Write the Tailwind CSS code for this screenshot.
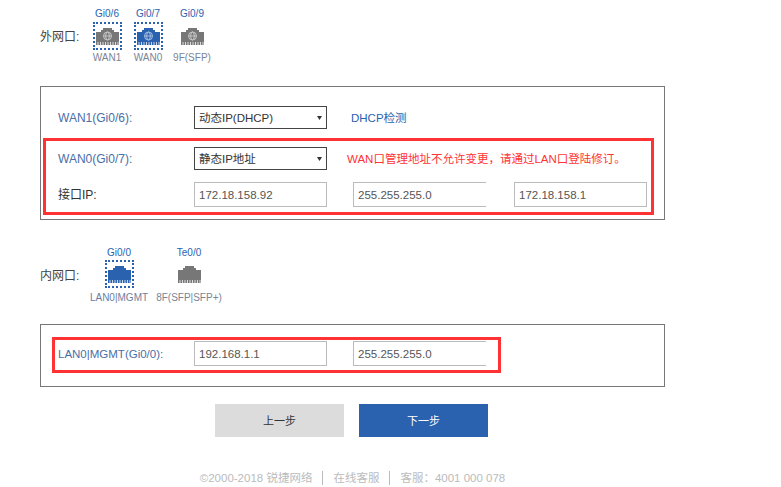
<!DOCTYPE html>
<html lang="zh-CN">
<head>
    <meta charset="UTF-8">
    <meta name="viewport" content="width=device-width, initial-scale=1.0">
    <title>接口配置</title>
    <script src="https://cdn.jsdelivr.net/npm/@tailwindcss/browser@4"></script>
</head>
<body class="bg-white">
<div class="relative w-[781px] h-[487px] overflow-hidden bg-white pl-10 pt-[6px] font-['Liberation_Sans','Noto_Sans_CJK_SC',sans-serif] text-[11.5px] leading-[14px] text-[#555]">

    <svg class="hidden">
        <symbol id="port" viewBox="0 0 23 17">
            <path d="M0 4h5V2h2V0h9v2h2v2h5v13H0z" fill="currentColor"/>
            <path d="M2 14v3M4.500 14v3M7 14v3M9.500 14v3M12 14v3M14.500 14v3M17 14v3M19.500 14v3M22 14v3" stroke="#fff" stroke-width="1" opacity=".75"/>
        </symbol>
        <symbol id="globe" viewBox="0 0 23 17">
            <g fill="none" stroke="#fff" stroke-width=".8" opacity=".7">
                <circle cx="11.500" cy="8" r="4"/>
                <ellipse cx="11.500" cy="8" rx="1.800" ry="4"/>
                <path d="M7.500 8h8"/>
            </g>
        </symbol>
    </svg>

    <!-- 外网口 -->
    <div class="flex">
        <div class="w-[47px] h-[59px] flex items-center text-xs text-[#444] pt-[2px]">外网口:</div>
        <div class="w-[40px] flex flex-col items-center text-[10px]">
            <span class="mt-px text-[#2a62b0]">Gi0/6</span>
            <div class="mt-px w-[29px] h-[28px] border-2 border-dotted border-[#2a62b0] flex items-center justify-center">
                <svg class="w-[23px] h-[17px] text-[#777]"><use href="#port"/><use href="#globe"/></svg>
            </div>
            <span class="mt-px text-[#7a8496] whitespace-nowrap">WAN1</span>
        </div>
        <div class="ml-px w-[40px] flex flex-col items-center text-[10px]">
            <span class="mt-px text-[#2a62b0]">Gi0/7</span>
            <div class="mt-px w-[29px] h-[28px] border-2 border-dotted border-[#2a62b0] flex items-center justify-center">
                <svg class="w-[23px] h-[17px] text-[#2a62b0]"><use href="#port"/><use href="#globe"/></svg>
            </div>
            <span class="mt-px text-[#7a8496] whitespace-nowrap">WAN0</span>
        </div>
        <div class="ml-1 w-[40px] flex flex-col items-center text-[10px]">
            <span class="mt-px text-[#2a62b0]">Gi0/9</span>
            <div class="mt-px h-[28px] flex items-center justify-center">
                <svg class="w-[23px] h-[17px] text-[#777]"><use href="#port"/><use href="#globe"/></svg>
            </div>
            <span class="mt-px text-[#7a8496] whitespace-nowrap">9F(SFP)</span>
        </div>
    </div>

    <!-- WAN 配置 -->
    <div class="mt-[21px] w-[625px] h-[134px] border border-[#777] pl-[17px] pt-[19px]">
        <div class="flex items-center">
            <div class="w-[136px] text-xs text-[#4a6ea8]">WAN1(Gi0/6):</div>
            <div class="w-[133px] h-[23px] border border-[#444] flex items-center justify-between pl-[4px] pr-[4px] text-[#333]">
                动态IP(DHCP)
                <svg class="w-[5px] h-[4px]" viewBox="0 0 5 4"><path d="M0 0h5L2.500 4z" fill="#333"/></svg>
            </div>
            <div class="ml-[24px] text-[#2a62b0]">DHCP检测</div>
        </div>
        <div class="mt-[18px] flex items-center">
            <div class="w-[136px] text-xs text-[#4a6ea8]">WAN0(Gi0/7):</div>
            <div class="w-[133px] h-[23px] border border-[#444] flex items-center justify-between pl-[4px] pr-[4px] text-[#333]">
                静态IP地址
                <svg class="w-[5px] h-[4px]" viewBox="0 0 5 4"><path d="M0 0h5L2.500 4z" fill="#333"/></svg>
            </div>
            <div class="ml-[20px] text-[#f33]">WAN口管理地址不允许变更，请通过LAN口登陆修订。</div>
        </div>
        <div class="mt-[12px] flex items-center">
            <div class="w-[136px] text-xs text-[#333]">接口IP:</div>
            <div class="w-[133px] h-[25px] border border-[#bbb] flex items-center pl-[4px]">172.18.158.92</div>
            <div class="ml-[26px] w-[133px] h-[25px] border border-r-0 border-[#bbb] flex items-center pl-[4px]">255.255.255.0</div>
            <div class="ml-[28px] w-[133px] h-[25px] border border-[#bbb] flex items-center pl-[4px]">172.18.158.1</div>
        </div>
    </div>

    <!-- 内网口 -->
    <div class="mt-[25px] flex">
        <div class="w-[44px] h-[59px] flex items-center text-xs text-[#444] pt-[2px] whitespace-nowrap">内网口:</div>
        <div class="w-[70px] flex flex-col items-center text-[10px]">
            <span class="mt-px text-[#2a62b0]">Gi0/0</span>
            <div class="w-[29px] h-[28px] border-2 border-dotted border-[#2a62b0] flex items-center justify-center">
                <svg class="w-[23px] h-[17px] text-[#2a62b0]"><use href="#port"/></svg>
            </div>
            <span class="mt-[3px] text-[#6b7ea0] whitespace-nowrap">LAN0|MGMT</span>
        </div>
        <div class="w-[70px] flex flex-col items-center text-[10px]">
            <span class="mt-px text-[#2a62b0]">Te0/0</span>
            <div class="h-[28px] flex items-center justify-center">
                <svg class="w-[23px] h-[17px] text-[#777]"><use href="#port"/></svg>
            </div>
            <span class="mt-[3px] text-[#7a8496] whitespace-nowrap">8F(SFP|SFP+)</span>
        </div>
    </div>

    <!-- LAN 配置 -->
    <div class="mt-[19px] w-[625px] h-[63px] border border-[#777] pl-[17px] pt-[16px]">
        <div class="flex items-center">
            <div class="w-[136px] text-[#4a6ea8] whitespace-nowrap">LAN0|MGMT(Gi0/0):</div>
            <div class="w-[133px] h-[25px] border border-[#bbb] flex items-center pl-[4px]">192.168.1.1</div>
            <div class="ml-[26px] w-[133px] h-[25px] border border-r-0 border-[#bbb] flex items-center pl-[4px]">255.255.255.0</div>
        </div>
    </div>

    <!-- 按钮 -->
    <div class="mt-[17px] pl-[175px] flex gap-[15px] text-[11px]">
        <button class="w-[129px] h-[33px] bg-[#dcdcdc] text-[#333]">上一步</button>
        <button class="w-[129px] h-[33px] bg-[#2a62b0] text-white">下一步</button>
    </div>

    <!-- 页脚 -->
    <div class="mt-[34px] w-[625px] flex justify-center items-center text-[#bbb]">
        <span>©2000-2018 锐捷网络</span>
        <span class="mx-[10px] w-px h-[14px] bg-[#bbb]"></span>
        <span>在线客服</span>
        <span class="mx-[10px] w-px h-[14px] bg-[#bbb]"></span>
        <span>客服：4001 000 078</span>
    </div>

    <!-- 红框标注 -->
    <div class="absolute left-[43px] top-[138px] w-[611px] h-[77px] border-[3px] border-[#f33]"></div>
    <div class="absolute left-[52px] top-[337px] w-[449px] h-[36px] border-[3px] border-[#f33]"></div>
</div>
</body>
</html>
